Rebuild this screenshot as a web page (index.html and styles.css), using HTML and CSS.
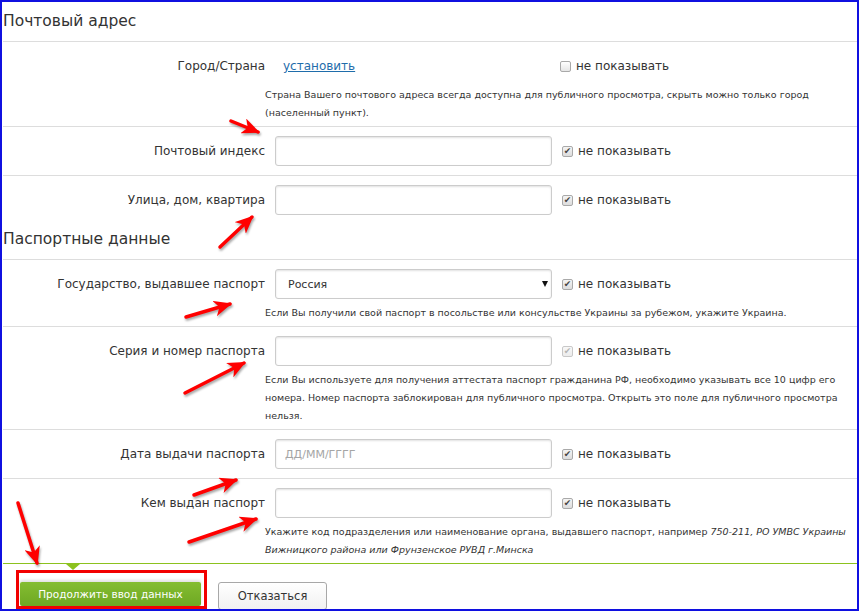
FILE: index.html
```html
<!DOCTYPE html>
<html lang="ru">
<head>
  <meta charset="UTF-8" />
  <title>Паспортные данные</title>
  <link rel="stylesheet" href="styles.css">
</head>
<body>
<div class="shot">

  <h2 class="section-title first">Почтовый адрес</h2>

  <div class="row has-help">
    <div class="line">
      <span class="label">Город/Страна</span>
      <div class="field"><a class="set-link" href="#">установить</a></div>
      <span class="hide"><span class="box off"></span>не показывать</span>
    </div>
    <p class="help">Страна Вашего почтового адреса всегда доступна для публичного просмотра, скрыть можно только город (населенный пункт).</p>
  </div>

  <div class="row">
    <div class="line">
      <span class="label">Почтовый индекс</span>
      <div class="field"><input type="text" class="txt"></div>
      <span class="hide"><span class="box">&#10004;</span>не показывать</span>
    </div>
  </div>

  <div class="row last-in-group">
    <div class="line">
      <span class="label">Улица, дом, квартира</span>
      <div class="field"><input type="text" class="txt"></div>
      <span class="hide"><span class="box">&#10004;</span>не показывать</span>
    </div>
  </div>

  <h2 class="section-title">Паспортные данные</h2>

  <div class="row has-help">
    <div class="line">
      <span class="label">Государство, выдавшее паспорт</span>
      <div class="field select-wrap">
        <select class="txt sel">
          <option>Россия</option>
        </select>
      </div>
      <span class="hide"><span class="box">&#10004;</span>не показывать</span>
    </div>
    <p class="help">Если Вы получили свой паспорт в посольстве или консульстве Украины за рубежом, укажите Украина.</p>
  </div>

  <div class="row has-help">
    <div class="line">
      <span class="label">Серия и номер паспорта</span>
      <div class="field"><input type="text" class="txt"></div>
      <span class="hide"><span class="box disabled">&#10004;</span>не показывать</span>
    </div>
    <p class="help">Если Вы используете для получения аттестата паспорт гражданина РФ, необходимо указывать все 10 цифр его номера. Номер паспорта заблокирован для публичного просмотра. Открыть это поле для публичного просмотра нельзя.</p>
  </div>

  <div class="row">
    <div class="line">
      <span class="label">Дата выдачи паспорта</span>
      <div class="field"><input type="text" class="txt" placeholder="ДД/ММ/ГГГГ"></div>
      <span class="hide"><span class="box">&#10004;</span>не показывать</span>
    </div>
  </div>

  <div class="row has-help final">
    <div class="line">
      <span class="label">Кем выдан паспорт</span>
      <div class="field"><input type="text" class="txt"></div>
      <span class="hide"><span class="box">&#10004;</span>не показывать</span>
    </div>
    <p class="help">Укажите код подразделения или наименование органа, выдавшего паспорт, например <i>750-211, РО&nbsp;УМВС&nbsp;Украины</i> <i>Вижницкого района или Фрунзенское РУВД г.Минска</i></p>
  </div>

  <div class="actions">
    <div class="highlight">
      <button class="btn-go">Продолжить ввод данных</button>
    </div>
    <button class="btn-cancel">Отказаться</button>
  </div>

  <!-- red arrows drawn over the screenshot -->
  <svg class="marks" width="860" height="612" viewBox="0 0 860 612">
    <defs>
      <marker id="head" markerWidth="18" markerHeight="16" refX="16" refY="8" orient="auto" markerUnits="userSpaceOnUse">
        <path d="M0,0 L18,8 L0,16 L5,8 Z" fill="#f00"/>
      </marker>
    </defs>
    <g stroke="#f00" stroke-width="3.5" stroke-linecap="round" marker-end="url(#head)">
      <line x1="231" y1="121" x2="258" y2="132"/>
      <line x1="220" y1="247" x2="252" y2="217"/>
      <line x1="186" y1="317" x2="230" y2="304"/>
      <line x1="185" y1="393" x2="244" y2="363"/>
      <line x1="194" y1="495" x2="236" y2="480"/>
      <line x1="189" y1="542" x2="256" y2="519"/>
      <line x1="18" y1="503" x2="37" y2="563"/>
    </g>
  </svg>

</div>
</body>
</html>
```

FILE: styles.css
```css
* {
  box-sizing: border-box;
  margin: 0;
  padding: 0;
}
body {
  background: #fff;
  font-family: "DejaVu Sans", Verdana, sans-serif;
  color: #333;
}
.shot {
  position: relative;
  width: 859px;
  height: 611px;
  border: 2px solid #1010e0;
  padding-left: 1px;
  overflow: hidden;
}
.section-title {
  font-size: 15.5px;
  font-weight: normal;
  line-height: 22px;
  color: #333;
  padding: 4px 0 9px;
  border-bottom: 1px solid #ddd;
}
.section-title.first {
  padding-top: 8px;
}
.row {
  padding: 9px 0;
  border-bottom: 1px solid #ddd;
}
.row.has-help {
  padding-bottom: 4px;
}
.row.last-in-group {
  border-bottom: none;
}
.row.final {
  border-bottom-color: #8cc21e;
  position: relative;
}
.row.final::after {
  content: "";
  position: absolute;
  left: 63px;
  bottom: -7px;
  border-left: 7px solid transparent;
  border-right: 7px solid transparent;
  border-top: 6px solid #8cc21e;
}
.line {
  display: flex;
  align-items: center;
  height: 30px;
}
.label {
  width: 262px;
  text-align: right;
  font-size: 12px;
  color: #333;
}
.field {
  width: 277px;
  margin-left: 10px;
  height: 30px;
  display: flex;
  align-items: center;
}
.set-link {
  font-size: 12px;
  color: #1f6dab;
  padding-left: 8px;
}
.txt {
  width: 277px;
  height: 30px;
  border: 1px solid #ccc;
  border-radius: 3px;
  box-shadow: inset 0 1px 2px rgba(0, 0, 0, 0.12);
  background: #fff;
  font-family: "DejaVu Sans", Verdana, sans-serif;
  font-size: 11px;
  color: #333;
  padding-left: 9px;
  outline: none;
}
.txt::placeholder {
  color: #a5a5a5;
}
.select-wrap {
  position: relative;
}
.sel {
  appearance: none;
  -webkit-appearance: none;
  padding-left: 12px;
}
.select-wrap::after {
  content: "";
  position: absolute;
  right: 4px;
  top: 12px;
  border-left: 3.5px solid transparent;
  border-right: 3.5px solid transparent;
  border-top: 6px solid #111;
}
.hide {
  display: flex;
  align-items: center;
  margin-left: 10px;
  font-size: 12px;
  color: #333;
}
.box {
  width: 11px;
  height: 11px;
  margin-right: 5px;
  border: 1px solid #a9a9a9;
  border-radius: 2px;
  background: linear-gradient(#f4f4f4, #dcdcdc);
  font-size: 9px;
  line-height: 9px;
  text-align: center;
  color: #444;
}
.box.off {
  background: linear-gradient(#fff, #e6e6e6);
  margin-left: -2px;
}
.box.disabled {
  color: #b5b5b5;
  border-color: #c8c8c8;
  background: linear-gradient(#f8f8f8, #ececec);
}
.help {
  margin: 5px 0 0 262px;
  padding-right: 4px;
  font-size: 9.5px;
  line-height: 18px;
  color: #333;
}
.actions {
  display: flex;
  align-items: flex-start;
  padding: 6px 0 0 13px;
}
.highlight {
  border: 3px solid #f20000;
  padding: 9px 3px 0 1px;
  height: 39px;
}
.btn-go {
  display: block;
  width: 181px;
  height: 24px;
  border: none;
  border-radius: 2px;
  background: linear-gradient(#84bd31, #6ea823);
  color: #fff;
  font-family: "DejaVu Sans", Verdana, sans-serif;
  font-size: 10.5px;
  box-shadow: 0 -2px 3px rgba(0, 0, 0, 0.12);
}
.btn-cancel {
  margin: 12px 0 0 11px;
  width: 109px;
  height: 28px;
  border: 1px solid #a8a8a8;
  border-radius: 3px;
  background: linear-gradient(#fff, #f1f1f1);
  color: #333;
  font-family: "DejaVu Sans", Verdana, sans-serif;
  font-size: 11.5px;
}
.marks {
  position: absolute;
  left: -2px;
  top: -2px;
  pointer-events: none;
  filter: drop-shadow(1px 2px 1px rgba(0, 0, 0, 0.35));
}
```
